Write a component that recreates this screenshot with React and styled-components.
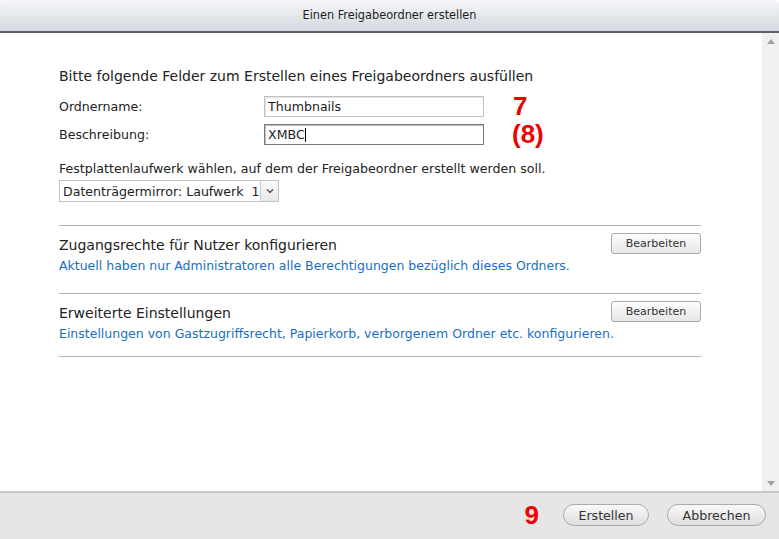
import React from "react";
import styled, { createGlobalStyle } from "styled-components";

const Global = createGlobalStyle`
  html, body { margin: 0; padding: 0; background: #fff; }
  body { font-family: "DejaVu Sans", Verdana, sans-serif; color: #222; }
  #root { width: 779px; height: 539px; }
`;

const Window = styled.div`
  width: 779px;
  height: 539px;
  display: flex;
  flex-direction: column;
  overflow: hidden;
  background: #fff;
`;

const TitleBar = styled.div`
  height: 33px;
  flex: none;
  display: flex;
  align-items: center;
  justify-content: center;
  background: linear-gradient(#f6f7f9, #d2d8df);
  border-bottom: 2px solid #5d6168;
  border-radius: 4px 4px 0 0;
  font-family: "DejaVu Sans Condensed", "DejaVu Sans", sans-serif;
  font-size: 12.6px;
  color: #1e1e1e;
  padding-bottom: 3px;
  box-sizing: border-box;
`;

const Middle = styled.div`
  flex: 1;
  display: flex;
  min-height: 0;
`;

const Content = styled.div`
  flex: 1;
  padding: 35px 61px 0 59px;
`;

const Scrollbar = styled.div`
  width: 17px;
  flex: none;
  background: #f0f0f0;
  display: flex;
  flex-direction: column;
  justify-content: space-between;
  align-items: center;
  padding: 6px 0 5px;
`;

const Arrow = styled.div`
  width: 0;
  height: 0;
  border-left: 4px solid transparent;
  border-right: 4px solid transparent;
  ${(p) => (p.$down ? "border-top: 5px solid #a3a3a3;" : "border-bottom: 5px solid #a3a3a3;")}
`;

const Heading = styled.div`
  font-size: 14px;
  line-height: 16px;
  margin-bottom: 12px;
`;

const FormGrid = styled.div`
  display: grid;
  grid-template-columns: 205px 220px auto;
  grid-auto-rows: 21px;
  row-gap: 7px;
  align-items: center;
`;

const Label = styled.div`
  font-size: 12.6px;
`;

const Input = styled.div`
  height: 21px;
  box-sizing: border-box;
  border: 1px solid ${(p) => (p.$focus ? "#7a7a7a" : "#c2c2c2")};
  box-shadow: inset 1px 1px 1px ${(p) => (p.$focus ? "#bbb" : "#e2e2e2")};
  font-size: 12.6px;
  padding: 0 3px;
  display: flex;
  align-items: center;
`;

const Caret = styled.span`
  display: inline-block;
  width: 1px;
  height: 14px;
  background: #000;
`;

const Annotation = styled.div`
  color: #f00000;
  font-family: "Liberation Sans", Arial, sans-serif;
  font-weight: bold;
  font-size: ${(p) => p.$size || 26}px;
  line-height: 21px;
  margin-left: ${(p) => p.$ml ?? 29}px;
`;

const DriveText = styled.div`
  font-size: 12.6px;
  margin-top: 16px;
`;

const Select = styled.div`
  margin-top: 4px;
  width: 220px;
  height: 22px;
  box-sizing: border-box;
  border: 1px solid #c2c2c2;
  display: flex;
  align-items: stretch;
  font-size: 12.6px;
  margin-bottom: 23px;
`;

const SelectText = styled.div`
  flex: 1;
  display: flex;
  align-items: center;
  padding-left: 3px;
  white-space: nowrap;
  overflow: hidden;
`;

const SelectBtn = styled.div`
  width: 17px;
  border-left: 1px solid #c8c8c8;
  background: linear-gradient(#fbfbfb, #e8e8e8);
  display: flex;
  align-items: center;
  justify-content: center;
`;

const Section = styled.div`
  border-top: 1px solid #b0b0b0;
  padding: 7px 0 20px;
  &:last-of-type {
    border-bottom: 1px solid #b0b0b0;
    padding-bottom: 15px;
  }
`;

const SectionHead = styled.div`
  display: flex;
  justify-content: space-between;
  align-items: center;
`;

const SectionTitle = styled.div`
  font-size: 14px;
  margin-top: 2px;
`;

const EditButton = styled.div`
  width: 90px;
  height: 21px;
  box-sizing: border-box;
  border: 1px solid #a9a9a9;
  border-radius: 3px;
  background: linear-gradient(#fdfdfd, #e6e6e6);
  font-size: 11px;
  display: flex;
  align-items: center;
  justify-content: center;
  color: #333;
`;

const Info = styled.div`
  color: #1a6ebf;
  font-size: 12.5px;
  margin-top: 4px;
`;

const Footer = styled.div`
  height: 48px;
  flex: none;
  box-sizing: border-box;
  background: #e6e6e6;
  border-top: 2px solid #c8c8c8;
  display: flex;
  align-items: center;
  justify-content: flex-end;
  padding: 0 13px 2px 0;
`;

const PillButton = styled.div`
  height: 22px;
  box-sizing: border-box;
  border: 1px solid #acacac;
  border-radius: 11px;
  background: linear-gradient(#f9f9f9, #dedede);
  font-size: 12.6px;
  color: #333;
  display: flex;
  align-items: center;
  justify-content: center;
  width: ${(p) => p.$w}px;
  margin-left: ${(p) => p.$ml || 0}px;
`;

export default function App() {
  return (
    <>
      <Global />
      <Window>
        <TitleBar>Einen Freigabeordner erstellen</TitleBar>
        <Middle>
          <Content>
            <Heading>Bitte folgende Felder zum Erstellen eines Freigabeordners ausfüllen</Heading>
            <FormGrid>
              <Label>Ordnername:</Label>
              <Input>Thumbnails</Input>
              <Annotation>7</Annotation>
              <Label>Beschreibung:</Label>
              <Input $focus>
                XMBC
                <Caret />
              </Input>
              <Annotation $ml={28}>(8)</Annotation>
            </FormGrid>
            <DriveText>Festplattenlaufwerk wählen, auf dem der Freigabeordner erstellt werden soll.</DriveText>
            <Select>
              <SelectText>Datenträgermirror: Laufwerk&nbsp; 1</SelectText>
              <SelectBtn>
                <svg width="8" height="6" viewBox="0 0 8 6">
                  <path d="M1 1.5 L4 4.5 L7 1.5" fill="none" stroke="#555" strokeWidth="1.5" />
                </svg>
              </SelectBtn>
            </Select>
            <Section>
              <SectionHead>
                <SectionTitle>Zugangsrechte für Nutzer konfigurieren</SectionTitle>
                <EditButton>Bearbeiten</EditButton>
              </SectionHead>
              <Info>Aktuell haben nur Administratoren alle Berechtigungen bezüglich dieses Ordners.</Info>
            </Section>
            <Section>
              <SectionHead>
                <SectionTitle>Erweiterte Einstellungen</SectionTitle>
                <EditButton>Bearbeiten</EditButton>
              </SectionHead>
              <Info>Einstellungen von Gastzugriffsrecht, Papierkorb, verborgenem Ordner etc. konfigurieren.</Info>
            </Section>
          </Content>
          <Scrollbar>
            <Arrow />
            <Arrow $down />
          </Scrollbar>
        </Middle>
        <Footer>
          <Annotation $size={26} $ml={0}>9</Annotation>
          <PillButton $w={86} $ml={24}>Erstellen</PillButton>
          <PillButton $w={99} $ml={18}>Abbrechen</PillButton>
        </Footer>
      </Window>
    </>
  );
}
